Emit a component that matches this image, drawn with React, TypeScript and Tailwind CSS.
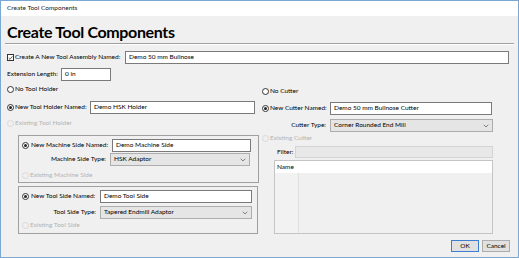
import React from "react";

const F = { fontFamily: 'Lato, "Open Sans", sans-serif' };

function Radio({ on, disabled }: { on?: boolean; disabled?: boolean }) {
  return (
    <span
      className={`inline-flex w-[7px] h-[7px] rounded-full border items-center justify-center shrink-0 ${
        disabled ? "border-[#d9d9d9] bg-[#f0f0f0]" : "border-[#333] bg-white"
      }`}
    >
      {on && <span className="w-[3px] h-[3px] rounded-full bg-[#222]" />}
    </span>
  );
}

function Input({ value, w }: { value: string; w: string }) {
  return (
    <div className={`${w} h-[13px] shrink-0 border border-[#7a7a7a] bg-white flex items-center pl-[3px] text-black`}>
      {value}
    </div>
  );
}

function Select({ value, w }: { value: string; w: string }) {
  return (
    <div className={`${w} h-[13px] shrink-0 border border-[#adadad] bg-[#e5e5e5] flex items-center justify-between pl-[3px] pr-[3px] text-black`}>
      <span>{value}</span>
      <svg width="6" height="4" viewBox="0 0 6 4">
        <path d="M0.7 0.7 L3 3 L5.3 0.7" stroke="#666" fill="none" strokeWidth="0.8" />
      </svg>
    </div>
  );
}

export default function App() {
  return (
    <div style={F} className="w-[519px] h-[258px] border border-[#7ba7d3] bg-[#f0f0f0] flex flex-col text-[6.5px] leading-none whitespace-nowrap text-black overflow-hidden">
      <div className="h-[15px] bg-white flex items-center pl-[6px] text-[#222] shrink-0">Create Tool Components</div>
      <div className="pl-[6px] pr-[8px] pt-[8px]">
        <div className="text-[16px] font-bold leading-[16px] tracking-[-0.35px] text-black">Create Tool Components</div>
        <div className="mt-[3px] -ml-[2px] h-[2px] border-t border-[#a0a0a0] border-b border-b-white -mr-[4px]" />
        <div className="flex items-center mt-[6px]">
          <span className="w-[7px] h-[7px] border border-[#333] bg-white flex items-center justify-center shrink-0">
            <svg width="6" height="6" viewBox="0 0 6 6">
              <path d="M0.8 3 L2.4 4.6 L5.3 1" stroke="#222" fill="none" strokeWidth="0.9" />
            </svg>
          </span>
          <span className="w-[111px] pl-[1px]">Create A New Tool Assembly Named:</span>
          <Input value="Demo 50 mm Bullnose" w="w-[384px]" />
        </div>
        <div className="flex items-center mt-[4px]">
          <span className="w-[54px]">Extension Length:</span>
          <Input value="0 in" w="w-[50px]" />
        </div>
        <div className="flex mt-[2px]">
          <div className="w-[254px] flex flex-col">
            <div className="flex items-center gap-[1px] h-[12px]">
              <Radio />
              <span>No Tool Holder</span>
            </div>
            <div className="flex items-center mt-[6px]">
              <Radio on />
              <span className="pl-[1px] w-[76px]">New Tool Holder Named:</span>
              <Input value="Demo HSK Holder" w="w-[165px]" />
            </div>
            <div className="flex items-center gap-[1px] h-[12px] mt-[3px] text-[#b3b3b3]">
              <Radio disabled />
              <span>Existing Tool Holder</span>
            </div>
            <div className="ml-[11px] mt-[6px] w-[241px] h-[48px] border border-[#a0a0a0] pl-[3px] pt-[3px] flex flex-col">
              <div className="flex items-center">
                <Radio on />
                <span className="pl-[2px] w-[83px]">New Machine Side Named:</span>
                <Input value="Demo Machine Side" w="w-[139px]" />
              </div>
              <div className="flex items-center mt-[1px]">
                <span className="w-[88px] text-right pr-[4px]">Machine Side Type:</span>
                <Select value="HSK Adaptor" w="w-[140px]" />
              </div>
              <div className="flex items-center gap-[1px] h-[12px] mt-[3px] text-[#b3b3b3]">
                <Radio disabled />
                <span>Existing Machine Side</span>
              </div>
            </div>
            <div className="ml-[11px] mt-[3px] w-[240px] h-[48px] border border-[#a0a0a0] pl-[3px] pt-[3px] flex flex-col">
              <div className="flex items-center">
                <Radio on />
                <span className="pl-[2px] w-[71px]">New Tool Side Named:</span>
                <Input value="Demo Tool Side" w="w-[152px]" />
              </div>
              <div className="flex items-center mt-[3px]">
                <span className="w-[78px] text-right pr-[4px]">Tool Side Type:</span>
                <Select value="Tapered Endmill Adaptor" w="w-[152px]" />
              </div>
              <div className="flex items-center gap-[1px] h-[12px] text-[#b3b3b3]">
                <Radio disabled />
                <span>Existing Tool Side</span>
              </div>
            </div>
          </div>
          <div className="w-[232px] flex flex-col pt-[2px]">
            <div className="flex items-center gap-[1px] h-[12px] pl-[1px]">
              <Radio />
              <span>No Cutter</span>
            </div>
            <div className="flex items-center mt-[5px] pl-[1px]">
              <Radio on />
              <span className="pl-[1px] w-[61px]">New Cutter Named:</span>
              <Input value="Demo 50 mm Bullnose Cutter" w="w-[162px]" />
            </div>
            <div className="flex items-center mt-[4px]">
              <span className="w-[69px] text-right pr-[4px]">Cutter Type:</span>
              <Select value="Corner Rounded End Mill" w="w-[163px]" />
            </div>
            <div className="flex items-center gap-[1px] h-[12px] pl-[1px] text-[#b3b3b3]">
              <Radio disabled />
              <span>Existing Cutter</span>
            </div>
            <div className="flex items-center mt-[2px]">
              <span className="w-[34px] pl-[16px]">Filter:</span>
              <div className="w-[198px] h-[12px] border border-[#d4d4d4] bg-[#e8e8e8]" />
            </div>
            <div className="ml-[13px] mt-[2px] w-[219px] h-[74px] border border-[#c4c4c4] bg-[#f0f0f0] flex flex-col">
              <div className="h-[12px] bg-white flex items-center pl-[2px]">Name</div>
              <div className="flex-1 flex">
                <div className="w-[24px] border-r border-[#e0e0e0] bg-[#f2f2f2]" />
              </div>
            </div>
          </div>
        </div>
        <div className="flex justify-end gap-[3px] mt-[6px]">
          <div className="w-[28px] h-[12px] border border-[#3c7fd1] bg-[#e1e1e1] flex items-center justify-center">OK</div>
          <div className="w-[28px] h-[12px] border border-[#adadad] bg-[#e1e1e1] flex items-center justify-center">Cancel</div>
        </div>
      </div>
    </div>
  );
}
